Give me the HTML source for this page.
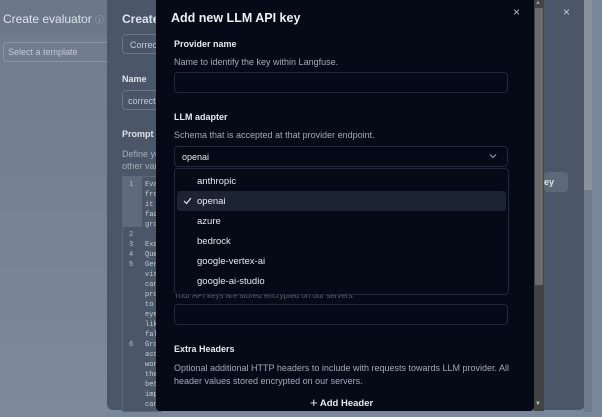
<!DOCTYPE html>
<html><head><meta charset="utf-8"><style>
*{box-sizing:border-box;margin:0;padding:0}
body{width:602px;height:417px;overflow:hidden;background:#7a8699;font-family:"Liberation Sans",sans-serif;position:relative}
.abs{position:absolute}
.left{left:0;top:0;width:107px;height:417px;background:linear-gradient(#6f7b8d,#7e8a9c)}
.sheet{left:107px;top:0;width:478px;height:410px;background:#4b5668;border-radius:0 0 6px 6px}
.t{color:#dfe3ea;white-space:nowrap}
.modal{left:156px;top:0;width:378px;height:411px;background:#050a16;border-radius:0 0 4px 4px}
.lbl{color:#e6e9ef;font-size:9px;font-weight:bold;position:absolute;left:18px}
.desc{color:#a2a9b6;font-size:9px;position:absolute;left:18px}
.inp{position:absolute;left:18px;width:334px;height:21px;border:1px solid #222a3a;border-radius:4px}
.code{font-family:"Liberation Mono",monospace;font-size:7px;color:#c7ccd4;line-height:10px}
</style></head><body>
<div class="abs left"></div>
<div class="abs" style="left:0;top:0;width:107px;height:34px;background:#6c788a"></div>
<div class="abs t" style="left:3px;top:12px;font-size:12px;color:#dde2ea">Create evaluator <span style="font-size:9px;color:#aab">ⓘ</span></div>
<div class="abs" style="left:3px;top:42px;width:110px;height:20px;border:1px solid #8995a6;border-radius:4px"></div>
<div class="abs t" style="left:8px;top:47px;font-size:9px;color:#c3c9d3">Select a template</div>
<div class="abs sheet"></div>
<div class="abs t" style="left:122px;top:12px;font-size:12px;font-weight:bold">Create</div>
<div class="abs" style="left:122px;top:34px;width:40px;height:20px;border:1px solid #6a7587;border-radius:4px"></div>
<div class="abs t" style="left:130px;top:40px;font-size:9px;color:#c3c9d3">Correc</div>
<div class="abs t" style="left:122px;top:74px;font-size:9px;font-weight:bold">Name</div>
<div class="abs" style="left:122px;top:90px;width:40px;height:20px;border:1px solid #6a7587;border-radius:4px"></div>
<div class="abs t" style="left:128px;top:96px;font-size:9px;color:#c3c9d3">correctn</div>
<div class="abs t" style="left:122px;top:129px;font-size:9px;font-weight:bold">Prompt</div>
<div class="abs t" style="left:122px;top:148px;font-size:9px;color:#a5adba;line-height:12px">Define yo<br>other var</div>
<div class="abs" style="left:122px;top:176px;width:40px;height:236px;border:1px solid #5d687a;background:#4b5668"></div>
<div class="abs" style="left:123px;top:177px;width:19px;height:50px;background:#5f6a7c"></div>
<div class="abs code" style="left:129px;top:180px;color:#b9c0cb">1<br><br><br><br><br>2<br>3<br>4<br>5<br><br><br><br><br><br><br><br>6</div>
<div class="abs code" style="left:145px;top:180px">Eva<br>fro<br>it<br>fac<br>gro<br><br>Exa<br>Que<br>Gen<br>vis<br>can<br>pro<br>to<br>eye<br>lik<br>fal<br>Gro<br>acc<br>wor<br>the<br>bet<br>imp<br>can</div>
<div class="abs" style="left:544px;top:172px;width:24px;height:20px;background:#5d6879;border-radius:4px"></div>
<div class="abs t" style="left:544px;top:177px;font-size:9px;font-weight:bold">ey</div>
<div class="abs t" style="left:563px;top:5px;font-size:12px;color:#c7ccd4">×</div>
<div class="abs" style="left:584px;top:0;width:8px;height:190px;background:#8a929d"></div>
<div class="abs" style="left:584px;top:190px;width:8px;height:222px;background:#6f7a8a"></div>
<div class="abs modal">
<div class="abs t" style="left:15px;top:11px;font-size:12.5px;font-weight:bold;color:#eef0f4">Add new LLM API key</div>
<div class="abs t" style="left:357px;top:5px;font-size:12px;color:#b8bec8">×</div>
<div class="lbl" style="top:39px">Provider name</div>
<div class="desc" style="top:57px">Name to identify the key within Langfuse.</div>
<div class="inp" style="top:72px"></div>
<div class="lbl" style="top:112px">LLM adapter</div>
<div class="desc" style="top:130px">Schema that is accepted at that provider endpoint.</div>
<div class="inp" style="top:146px"></div>
<div class="abs t" style="left:26px;top:152px;font-size:9px;color:#e6e9ef">openai</div>
<svg class="abs" style="left:333px;top:153px" width="8" height="6" viewBox="0 0 8 6"><path d="M1 1.5 4 4.5 7 1.5" fill="none" stroke="#9aa1ad" stroke-width="1"/></svg>
<div class="abs t" style="left:18px;top:291px;font-size:8px;color:#5a6170">Your API keys are stored encrypted on our servers.</div>
<div class="abs" style="left:18px;top:168px;width:335px;height:127px;border:1px solid #222a3a;border-radius:4px;background:#050a16"></div>
<div class="abs" style="left:21px;top:191px;width:329px;height:20px;background:#1c2333;border-radius:3px"></div>
<svg class="abs" style="left:27px;top:197px" width="9" height="8" viewBox="0 0 9 8"><path d="M1 4 3.5 6.5 8 1" fill="none" stroke="#e6e9ef" stroke-width="1.2"/></svg>
<div class="abs t" style="left:41px;top:172px;font-size:9.5px;line-height:20px;color:#e6e9ef">anthropic<br>openai<br>azure<br>bedrock<br>google-vertex-ai<br>google-ai-studio</div>
<div class="inp" style="top:304px"></div>
<div class="lbl" style="top:344px">Extra Headers</div>
<div class="desc" style="top:362px;line-height:13px">Optional additional HTTP headers to include with requests towards LLM provider. All<br>header values stored encrypted on our servers.</div>
<div class="abs t" style="left:154px;top:394px;font-size:9.5px;font-weight:bold;color:#e6e9ef"><span style="font-size:13px;font-weight:normal;position:relative;top:1px">+</span> Add Header</div>
</div>
<div class="abs" style="left:534px;top:0;width:10px;height:411px;background:#434343"></div>
<div class="abs" style="left:535px;top:8px;width:8px;height:277px;background:#6b6b6b"></div>
<div class="abs t" style="left:535px;top:401px;font-size:6px;color:#bbb">▼</div>
<div class="abs t" style="left:535px;top:0px;font-size:6px;color:#999">▲</div>
</body></html>
